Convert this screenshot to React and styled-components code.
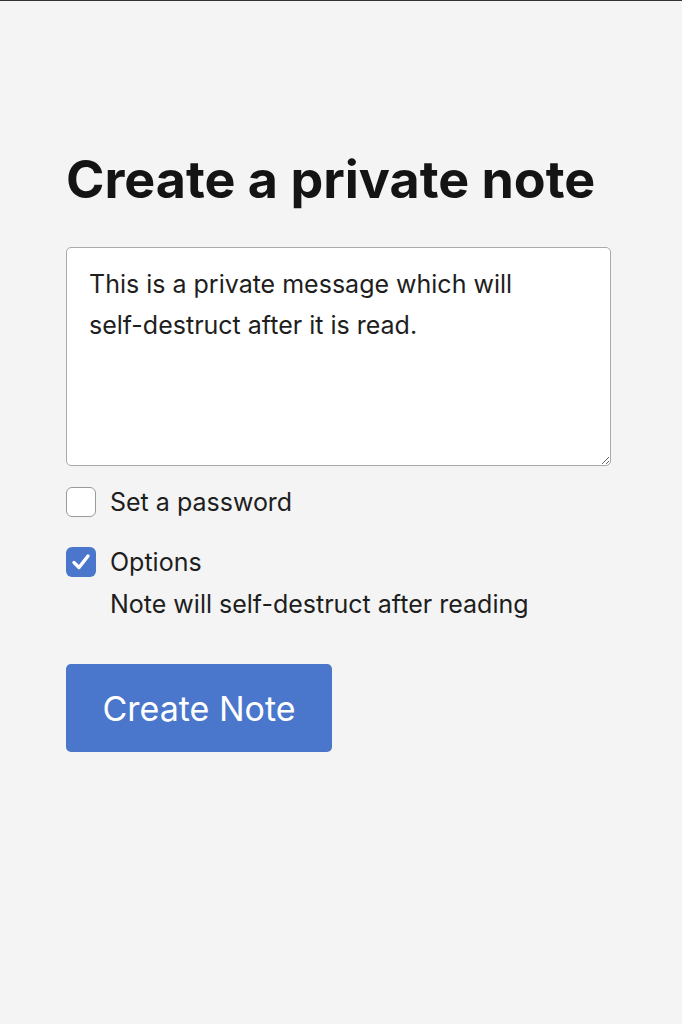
import React from "react";
import styled, { createGlobalStyle } from "styled-components";

const Global = createGlobalStyle`
  html, body { margin: 0; padding: 0; background: #f4f4f4; }
  body { font-family: Inter, "Liberation Sans", Arial, sans-serif; color: #1a1a1a; }
`;

const Page = styled.div`
  min-height: 1024px;
  box-sizing: border-box;
  border-top: 1px solid #333;
  background: #f4f4f4;
  padding: 147px 71px 0 66px;
`;

const Title = styled.h1`
  margin: 0 0 35px;
  font-size: 52px;
  font-weight: 700;
  letter-spacing: 0;
  line-height: 64px;
  color: #141414;
`;

const TextArea = styled.textarea`
  display: block;
  width: 100%;
  height: 219px;
  box-sizing: border-box;
  padding: 16px 60px 16px 22px;
  border: 1.5px solid #a9a9a9;
  border-radius: 5px;
  background: #fff;
  font-family: Inter, "Liberation Sans", Arial, sans-serif;
  font-size: 25px;
  line-height: 41px;
  color: #1e1e1e;
  resize: vertical;
  outline: none;
`;

const Options = styled.div`
  display: flex;
  flex-direction: column;
  gap: 28px;
  margin-top: 20px;
`;

const Row = styled.label`
  display: grid;
  grid-template-columns: 30px 1fr;
  column-gap: 14px;
  align-items: center;
  font-size: 25px;
  line-height: 32px;
  color: #1e1e1e;
`;

const Box = styled.span`
  width: 30px;
  height: 30px;
  box-sizing: border-box;
  border-radius: 6px;
  border: ${(p) => (p.$checked ? "none" : "1.5px solid #9a9a9a")};
  background: ${(p) => (p.$checked ? "#4a77cb" : "#fff")};
  display: flex;
  align-items: center;
  justify-content: center;
`;

const Hint = styled.div`
  grid-column: 2;
  margin-top: 10px;
  font-size: 25px;
  line-height: 32px;
`;

const Button = styled.button`
  margin-top: 44px;
  width: 266px;
  height: 88px;
  border: none;
  border-radius: 5px;
  background: #4a77cb;
  color: #fff;
  font-family: Inter, "Liberation Sans", Arial, sans-serif;
  font-size: 34px;
  font-weight: 400;
  cursor: pointer;
`;

const Check = () => (
  <svg width="22" height="22" viewBox="0 0 22 22" fill="none">
    <path d="M4 11.5 L9 16.5 L18 5" stroke="#fff" strokeWidth="3.4" strokeLinecap="round" strokeLinejoin="round" />
  </svg>
);

export default function App() {
  return (
    <>
      <Global />
      <Page>
        <Title>Create a private note</Title>
        <TextArea defaultValue="This is a private message which will self-destruct after it is read." />
        <Options>
          <Row>
            <Box />
            <span>Set a password</span>
          </Row>
          <Row>
            <Box $checked>
              <Check />
            </Box>
            <span>Options</span>
            <Hint>Note will self-destruct after reading</Hint>
          </Row>
        </Options>
        <Button>Create Note</Button>
      </Page>
    </>
  );
}
